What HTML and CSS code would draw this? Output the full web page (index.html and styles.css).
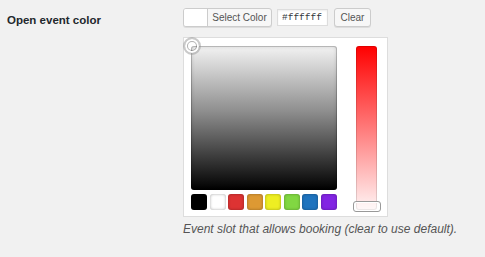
FILE: index.html
```html
<!DOCTYPE html>
<html>
<head>
<meta charset="utf-8">
<link rel="stylesheet" href="styles.css">
</head>
<body>
<div class="row">
  <div class="label">Open event color</div>
  <div class="field">
    <div class="controls">
      <button class="color-result"><span class="swatch"></span><span class="result-text">Select Color</span></button>
      <input class="hex" type="text" value="#ffffff">
      <button class="clear">Clear</button>
    </div>
    <div class="picker">
      <div class="square-wrap">
        <div class="square"><span class="handle"></span></div>
        <div class="palette">
          <span class="pal pal-black"></span>
          <span class="pal pal-white"></span>
          <span class="pal pal-red"></span>
          <span class="pal pal-orange"></span>
          <span class="pal pal-yellow"></span>
          <span class="pal pal-green"></span>
          <span class="pal pal-blue"></span>
          <span class="pal pal-purple"></span>
        </div>
      </div>
      <div class="strip"><span class="strip-handle"></span></div>
    </div>
    <p class="desc">Event slot that allows booking (clear to use default).</p>
  </div>
</div>
</body>
</html>
```

FILE: styles.css
```css
html, body {
  margin: 0;
  padding: 0;
  background: #f1f1f1;
}
body {
  font-family: "Liberation Sans", Arial, sans-serif;
  color: #23282d;
}
.row {
  display: flex;
}
.label {
  width: 176px;
  padding-left: 7px;
  padding-top: 13px;
  font-size: 11.5px;
  line-height: 14px;
  font-weight: bold;
  color: #23282d;
}
.field {
  padding-top: 8px;
}
.controls {
  display: flex;
  align-items: flex-start;
  height: 19px;
}
.color-result {
  box-sizing: border-box;
  display: flex;
  width: 89px;
  height: 19px;
  padding: 0;
  margin: 0;
  border: 1px solid #ccc;
  border-radius: 3px;
  background: #f7f7f7;
  box-shadow: 0 1px 0 #ddd;
  overflow: hidden;
}
.swatch {
  width: 23px;
  height: 100%;
  background: #fff;
  border-right: 1px solid #ccc;
}
.result-text {
  flex: 1;
  font-family: "Liberation Sans", Arial, sans-serif;
  font-size: 10px;
  line-height: 17px;
  color: #555;
  text-align: center;
}
.hex {
  box-sizing: border-box;
  width: 51px;
  height: 17px;
  margin: 1px 0 0 5px;
  padding: 0 0 0 4px;
  border: 1px solid #ddd;
  background: #fff;
  font-family: "Liberation Mono", monospace;
  font-size: 9.5px;
  color: #32373c;
  box-shadow: inset 0 1px 2px rgba(0,0,0,.07);
  outline: none;
}
.clear {
  box-sizing: border-box;
  width: 37px;
  height: 19px;
  margin: 0 0 0 6px;
  padding: 0;
  border: 1px solid #ccc;
  border-radius: 3px;
  background: #f7f7f7;
  box-shadow: 0 1px 0 #ddd;
  font-family: "Liberation Sans", Arial, sans-serif;
  font-size: 10px;
  line-height: 17px;
  color: #555;
}
.picker {
  box-sizing: border-box;
  display: flex;
  gap: 19px;
  width: 205px;
  height: 180px;
  margin-top: 10px;
  padding: 8px 9px 6px 7px;
  border: 1px solid #ddd;
  background: #fff;
}
.square-wrap {
  width: 146px;
}
.square {
  position: relative;
  height: 144px;
  border-radius: 3px;
  background: linear-gradient(#f3f3f3, #8f8f8f 45%, #000);
  box-shadow: inset 0 0 0 1px rgba(0,0,0,.18), inset 0 0 4px rgba(0,0,0,.2);
}
.handle {
  position: absolute;
  left: -8px;
  top: -9px;
  box-sizing: border-box;
  width: 18px;
  height: 18px;
  border-radius: 50%;
  border: 2px solid rgba(150,150,150,.5);
  box-shadow: inset 0 0 0 2px #fff, inset 0 0 0 3px rgba(0,0,0,.3);
}
.palette {
  display: flex;
  justify-content: space-between;
  margin-top: 4px;
}
.pal {
  width: 16px;
  height: 16px;
  border-radius: 3px;
  box-shadow: inset 0 0 3px rgba(0,0,0,.35);
}
.pal-black { background: #000; }
.pal-white { background: #fff; }
.pal-red { background: #dd3333; }
.pal-orange { background: #dd9933; }
.pal-yellow { background: #eeee22; }
.pal-green { background: #81d742; }
.pal-blue { background: #1e73be; }
.pal-purple { background: #8224e3; }
.strip {
  position: relative;
  width: 21px;
  height: 164px;
  border-radius: 3px;
  background: linear-gradient(#ff0000, #fff4f4);
  box-shadow: inset 0 0 0 1px rgba(0,0,0,.12);
}
.strip-handle {
  position: absolute;
  left: -3px;
  top: 155px;
  box-sizing: border-box;
  width: 28px;
  height: 11px;
  border-radius: 3px;
  border: 1px solid #999;
  background: rgba(255,255,255,.4);
  box-shadow: inset 0 0 0 1px #fff;
}
.desc {
  margin: 5px 0 0;
  font-size: 12px;
  line-height: 15px;
  font-style: italic;
  color: #555;
}
```
